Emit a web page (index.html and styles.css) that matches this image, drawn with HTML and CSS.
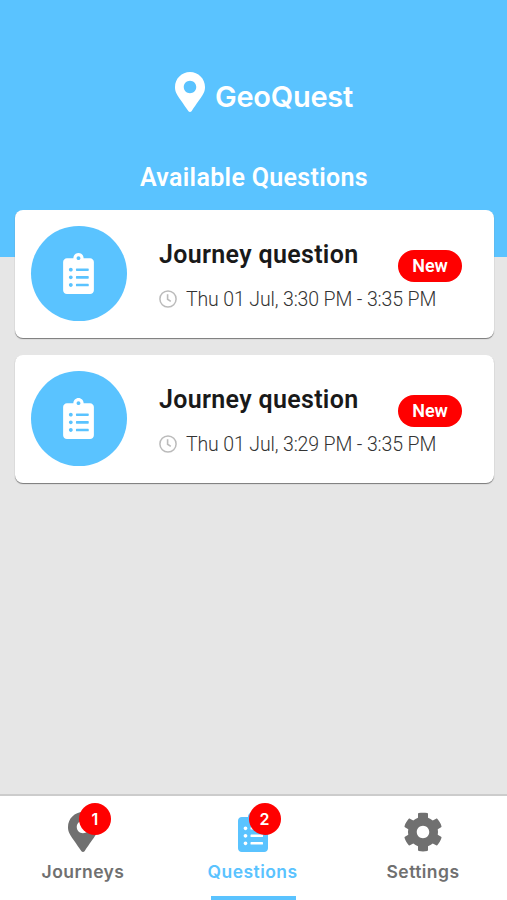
FILE: index.html
```html
<!DOCTYPE html>
<html lang="en">
<head>
<meta charset="utf-8">
<title>GeoQuest</title>
<link rel="stylesheet" href="styles.css">
</head>
<body>
<svg class="sprite" aria-hidden="true">
  <symbol id="marker" viewBox="0 0 384 512"><path d="M172.268 501.67C26.97 291.031 0 269.413 0 192 0 85.961 85.961 0 192 0s192 85.961 192 192c0 77.413-26.97 99.031-172.268 309.67-9.535 13.774-29.93 13.773-39.464 0zM192 272c44.183 0 80-35.817 80-80s-35.817-80-80-80-80 35.817-80 80 35.817 80 80 80z"/></symbol>
  <symbol id="clipboard" viewBox="0 0 384 512"><path d="M336 64h-80c0-35.3-28.7-64-64-64s-64 28.7-64 64H48C21.5 64 0 85.500 0 112v352c0 26.500 21.500 48 48 48h288c26.500 0 48-21.500 48-48V112c0-26.500-21.500-48-48-48zM96 424c-13.300 0-24-10.700-24-24s10.700-24 24-24 24 10.700 24 24-10.700 24-24 24zm0-96c-13.300 0-24-10.700-24-24s10.700-24 24-24 24 10.700 24 24-10.700 24-24 24zm0-96c-13.300 0-24-10.700-24-24s10.700-24 24-24 24 10.700 24 24-10.700 24-24 24zm96-192c13.300 0 24 10.700 24 24s-10.700 24-24 24-24-10.700-24-24 10.700-24 24-24zm128 368c0 4.400-3.600 8-8 8H168c-4.400 0-8-3.600-8-8v-16c0-4.400 3.600-8 8-8h144c4.400 0 8 3.600 8 8v16zm0-96c0 4.400-3.600 8-8 8H168c-4.400 0-8-3.600-8-8v-16c0-4.400 3.600-8 8-8h144c4.400 0 8 3.600 8 8v16zm0-96c0 4.400-3.600 8-8 8H168c-4.400 0-8-3.600-8-8v-16c0-4.400 3.600-8 8-8h144c4.400 0 8 3.600 8 8v16z"/></symbol>
  <symbol id="clock" viewBox="0 0 18 18"><circle cx="9" cy="9" r="8.100" fill="none" stroke="currentColor" stroke-width="1.500"/><path d="M8.600 4.200V9.200l3.200 2.100" fill="none" stroke="currentColor" stroke-width="1.600"/></symbol>
  <symbol id="cog" viewBox="0 0 512 512"><path d="M487.4 315.7l-42.6-24.6c4.3-23.2 4.3-47 0-70.2l42.6-24.6c4.9-2.8 7.1-8.6 5.5-14-11.1-35.6-30-67.8-54.7-94.6-3.8-4.1-10-5.1-14.8-2.3L380.800 110c-17.9-15.4-38.5-27.3-60.8-35.1V25.8c0-5.6-3.9-10.5-9.4-11.7-36.7-8.2-74.3-7.8-109.2 0-5.5 1.2-9.4 6.1-9.4 11.7V75c-22.2 7.9-42.8 19.8-60.8 35.1L88.7 85.5c-4.900-2.800-11-1.900-14.800 2.300-24.700 26.700-43.600 58.900-54.700 94.600-1.700 5.400.6 11.200 5.500 14L67.300 221c-4.300 23.200-4.300 47 0 70.200l-42.600 24.600c-4.900 2.800-7.100 8.600-5.500 14 11.100 35.600 30 67.800 54.700 94.600 3.800 4.100 10 5.100 14.800 2.300l42.600-24.600c17.900 15.400 38.500 27.300 60.800 35.100v49.200c0 5.600 3.900 10.500 9.400 11.700 36.700 8.200 74.300 7.800 109.200 0 5.500-1.200 9.400-6.100 9.400-11.700v-49.200c22.200-7.900 42.800-19.800 60.800-35.100l42.600 24.600c4.900 2.800 11 1.900 14.800-2.300 24.700-26.700 43.600-58.900 54.700-94.600 1.500-5.500-.7-11.300-5.600-14.100zM256 336c-44.100 0-80-35.900-80-80s35.900-80 80-80 80 35.900 80 80-35.900 80-80 80z"/></symbol>
</svg>
<div class="app">
  <header class="header">
    <div class="brand"><svg class="brand-icon"><use href="#marker"/></svg><span class="brand-name">GeoQuest</span></div>
    <h1 class="heading">Available Questions</h1>
  </header>
  <main class="list">
    <article class="card">
      <div class="avatar"><svg class="avatar-icon"><use href="#clipboard"/></svg></div>
      <div class="info">
        <h2 class="title">Journey question</h2>
        <p class="time"><svg class="clock"><use href="#clock"/></svg><span>Thu 01 Jul, 3:30 PM - 3:35 PM</span></p>
      </div>
      <span class="tag">New</span>
    </article>
    <article class="card">
      <div class="avatar"><svg class="avatar-icon"><use href="#clipboard"/></svg></div>
      <div class="info">
        <h2 class="title">Journey question</h2>
        <p class="time"><svg class="clock"><use href="#clock"/></svg><span>Thu 01 Jul, 3:29 PM - 3:35 PM</span></p>
      </div>
      <span class="tag">New</span>
    </article>
  </main>
  <nav class="tabs">
    <a class="tab"><span class="tab-icon"><svg class="glyph"><use href="#marker"/></svg><span class="count">1</span></span><span class="label">Journeys</span></a>
    <a class="tab active"><span class="tab-icon"><svg class="glyph"><use href="#clipboard"/></svg><span class="count">2</span></span><span class="label">Questions</span></a>
    <a class="tab"><span class="tab-icon"><svg class="glyph wide"><use href="#cog"/></svg></span><span class="label">Settings</span></a>
  </nav>
</div>
</body>
</html>
```

FILE: styles.css
```css
* { box-sizing: border-box; }
body { margin: 0; font-family: Roboto, "Liberation Sans", sans-serif; }
h1, h2, p { margin: 0; }
svg { display: block; fill: currentColor; flex: none; }
.sprite { position: absolute; width: 0; height: 0; }
.app { display: flex; flex-direction: column; height: 900px; background: #e6e6e6; overflow: hidden; }
.header { height: 257px; flex: none; background: #5ac3ff; color: #fff; padding-top: 71.5px; }
.brand { display: flex; gap: 10px; padding-left: 175px; height: 91px; }
.brand-icon { width: 30px; height: 40px; }
.brand-name { font: 600 29px/34px Inter, sans-serif; margin-top: 8px; letter-spacing: -0.25px; white-space: nowrap; }
.heading { font-size: 25px; line-height: 30px; font-weight: 600; text-align: center; letter-spacing: 0.33px; padding-left: 1px; }
.list { flex: 1; margin-top: -47.5px; padding: 0 13px 0 15px; display: flex; flex-direction: column; gap: 17px; }
.card { height: 128px; flex: none; background: #fff; border-radius: 8px; box-shadow: 0 1px 1px #777; display: flex; padding: 16px; }
.avatar { width: 95.5px; height: 95.5px; flex: none; border-radius: 50%; background: #5ac3ff; color: #fff; display: flex; align-items: center; justify-content: center; }
.avatar-icon { width: 31px; height: 41px; margin-right: 1px; }
.info { width: 239px; margin-left: 32.5px; padding-top: 13px; white-space: nowrap; }
.title { font-size: 25px; line-height: 32px; font-weight: 600; color: #191919; letter-spacing: 0.32px; }
.time { display: flex; align-items: center; gap: 9px; margin-top: 15px; font-size: 19.5px; line-height: 26px; font-weight: 300; color: #333; letter-spacing: -0.13px; }
.time span { padding-top: 1px; }
.clock { width: 18px; height: 18px; color: #bbb; }
.tag { width: 64px; height: 32px; margin-top: 24px; border-radius: 16px; background: #f00; color: #fff; font-size: 18px; line-height: 32px; font-weight: 600; text-align: center; }
.tabs { height: 106px; flex: none; display: grid; grid-template-columns: 166px 173px 168px; border-top: 2px solid #ccc; background: #fff; }
.tab { display: flex; flex-direction: column; align-items: center; padding-top: 16px; color: #707070; }
.active { color: #5ac3ff; background: linear-gradient(#5ac3ff, #5ac3ff) 45px 100% / 85px 4.5px no-repeat; }
.tab-icon { position: relative; height: 40px; }
.glyph { width: 30px; height: 40px; }
.wide { width: 40px; }
.count { position: absolute; left: 11px; top: -9px; width: 32px; height: 32px; border-radius: 50%; background: #f00; color: #fff; font: 600 16px/33px Inter, sans-serif; text-align: center; }
.label { font: 600 17.5px/22px Inter, sans-serif; letter-spacing: 0.45px; margin-top: 9px; }
```
